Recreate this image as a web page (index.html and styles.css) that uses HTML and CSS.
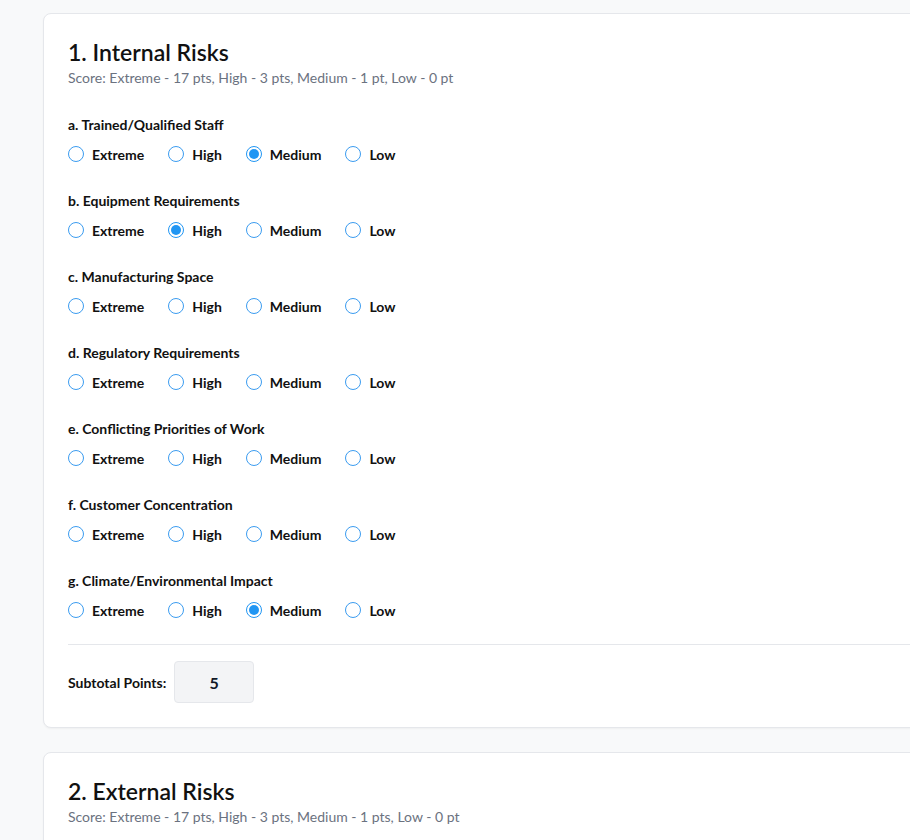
FILE: index.html
```html
<!DOCTYPE html>
<html lang="en">
<head>
<meta charset="utf-8">
<title>Risk Assessment</title>
<link rel="stylesheet" href="styles.css">
</head>
<body>
<main class="page">
  <section class="card">
    <h2 class="card-title">1. Internal Risks</h2>
    <p class="card-sub">Score: Extreme - 17 pts, High - 3 pts, Medium - 1 pt, Low - 0 pt</p>
    <div class="questions">
      <div class="question">
        <div class="q-label">a. Trained/Qualified Staff</div>
        <div class="options">
          <label class="opt"><input type="radio" name="qa"><span>Extreme</span></label>
          <label class="opt"><input type="radio" name="qa"><span>High</span></label>
          <label class="opt"><input type="radio" name="qa" checked><span>Medium</span></label>
          <label class="opt"><input type="radio" name="qa"><span>Low</span></label>
        </div>
      </div>
      <div class="question">
        <div class="q-label">b. Equipment Requirements</div>
        <div class="options">
          <label class="opt"><input type="radio" name="qb"><span>Extreme</span></label>
          <label class="opt"><input type="radio" name="qb" checked><span>High</span></label>
          <label class="opt"><input type="radio" name="qb"><span>Medium</span></label>
          <label class="opt"><input type="radio" name="qb"><span>Low</span></label>
        </div>
      </div>
      <div class="question">
        <div class="q-label">c. Manufacturing Space</div>
        <div class="options">
          <label class="opt"><input type="radio" name="qc"><span>Extreme</span></label>
          <label class="opt"><input type="radio" name="qc"><span>High</span></label>
          <label class="opt"><input type="radio" name="qc"><span>Medium</span></label>
          <label class="opt"><input type="radio" name="qc"><span>Low</span></label>
        </div>
      </div>
      <div class="question">
        <div class="q-label">d. Regulatory Requirements</div>
        <div class="options">
          <label class="opt"><input type="radio" name="qd"><span>Extreme</span></label>
          <label class="opt"><input type="radio" name="qd"><span>High</span></label>
          <label class="opt"><input type="radio" name="qd"><span>Medium</span></label>
          <label class="opt"><input type="radio" name="qd"><span>Low</span></label>
        </div>
      </div>
      <div class="question">
        <div class="q-label">e. Conflicting Priorities of Work</div>
        <div class="options">
          <label class="opt"><input type="radio" name="qe"><span>Extreme</span></label>
          <label class="opt"><input type="radio" name="qe"><span>High</span></label>
          <label class="opt"><input type="radio" name="qe"><span>Medium</span></label>
          <label class="opt"><input type="radio" name="qe"><span>Low</span></label>
        </div>
      </div>
      <div class="question">
        <div class="q-label">f. Customer Concentration</div>
        <div class="options">
          <label class="opt"><input type="radio" name="qf"><span>Extreme</span></label>
          <label class="opt"><input type="radio" name="qf"><span>High</span></label>
          <label class="opt"><input type="radio" name="qf"><span>Medium</span></label>
          <label class="opt"><input type="radio" name="qf"><span>Low</span></label>
        </div>
      </div>
      <div class="question">
        <div class="q-label">g. Climate/Environmental Impact</div>
        <div class="options">
          <label class="opt"><input type="radio" name="qg"><span>Extreme</span></label>
          <label class="opt"><input type="radio" name="qg"><span>High</span></label>
          <label class="opt"><input type="radio" name="qg" checked><span>Medium</span></label>
          <label class="opt"><input type="radio" name="qg"><span>Low</span></label>
        </div>
      </div>
    </div>
    <div class="subtotal">
      <span class="subtotal-label">Subtotal Points:</span>
      <div class="subtotal-box">5</div>
    </div>
  </section>
  <section class="card">
    <h2 class="card-title">2. External Risks</h2>
    <p class="card-sub">Score: Extreme - 17 pts, High - 3 pts, Medium - 1 pts, Low - 0 pt</p>
  </section>
</main>
</body>
</html>
```
FILE: styles.css
```css
html, body {
  margin: 0;
  padding: 0;
  background: #f8f9fa;
  overflow: hidden;
}
body {
  font-family: "Lato", "Noto Sans", sans-serif;
  color: #111827;
}
.page {
  padding: 13px 0 0 43px;
  display: flex;
  flex-direction: column;
  gap: 24px;
  width: 1000px;
}
.card {
  background: #fff;
  border: 1px solid #e5e7eb;
  border-radius: 8px;
  padding: 24px;
  box-shadow: 0 1px 2px rgba(0,0,0,0.04);
}
.card-title {
  margin: 0;
  font-size: 23px;
  line-height: 29px;
  font-weight: 600;
  color: #111;
}
.card-sub {
  margin: 2px 0 0;
  font-size: 14px;
  line-height: 18px;
  color: #6b7280;
}
.questions {
  margin-top: 29px;
  display: flex;
  flex-direction: column;
  gap: 28px;
}
.q-label {
  font-size: 14px;
  line-height: 18px;
  font-weight: 700;
  color: #111;
}
.options {
  margin-top: 10px;
  display: flex;
  gap: 24px;
  height: 20px;
  align-items: center;
}
.opt {
  display: flex;
  align-items: center;
  gap: 8px;
  font-size: 14px;
  font-weight: 700;
  color: #111;
  cursor: pointer;
}
.opt input {
  appearance: none;
  -webkit-appearance: none;
  margin: 0;
  width: 16px;
  height: 16px;
  border: 1px solid #3b9cf0;
  border-radius: 50%;
  background: #fff;
  position: relative;
}
.opt input:checked {
  border-color: #2196f3;
}
.opt input:checked::after {
  content: "";
  position: absolute;
  inset: 2px;
  border-radius: 50%;
  background: #2196f3;
}
.subtotal {
  margin-top: 24px;
  border-top: 1px solid #e5e7eb;
  padding-top: 16px;
  display: flex;
  align-items: center;
  gap: 8px;
}
.subtotal-label {
  font-size: 14px;
  font-weight: 700;
  color: #111;
}
.subtotal-box {
  width: 78px;
  height: 40px;
  border: 1px solid #e5e7eb;
  border-radius: 4px;
  background: #f3f4f6;
  display: flex;
  align-items: center;
  justify-content: center;
  font-size: 16px;
  font-weight: 700;
}
```
